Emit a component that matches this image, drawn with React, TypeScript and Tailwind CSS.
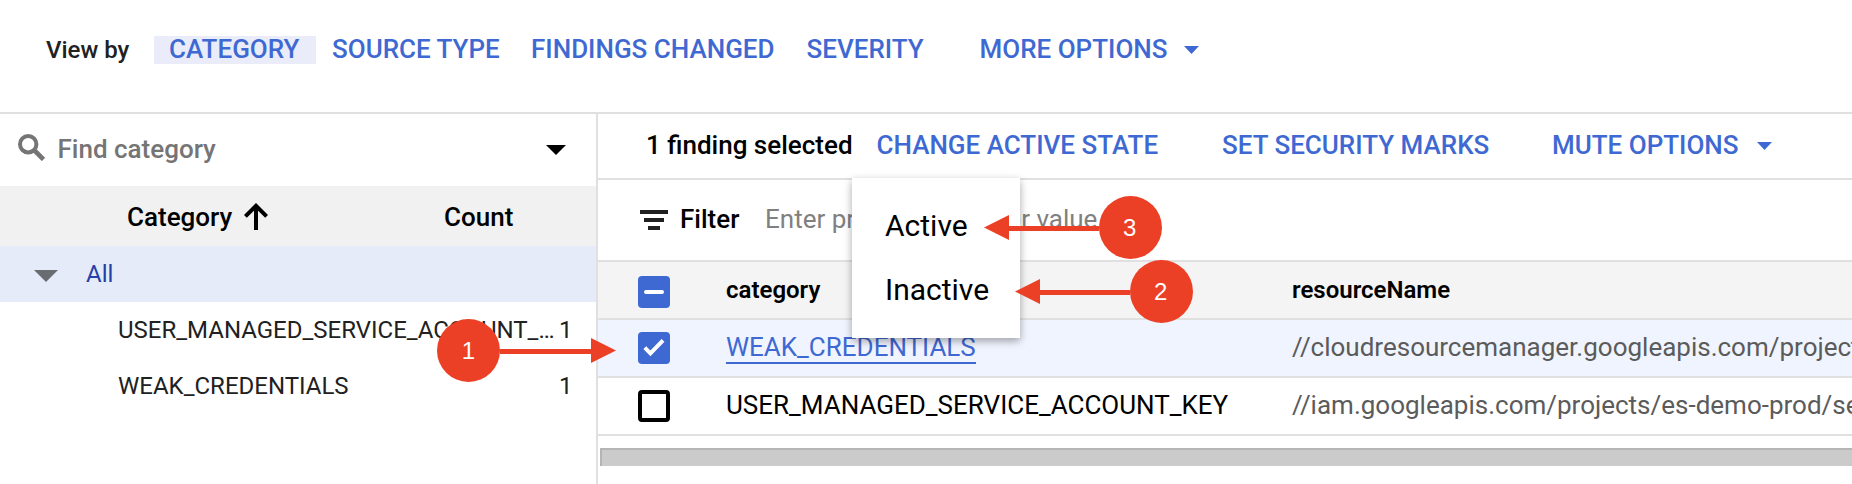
import React from "react";

function Caret({ className, w, h }: { className?: string; w: number; h: number }) {
  return (
    <svg className={`block shrink-0 ${className ?? ""}`} width={w} height={h} viewBox="0 0 20 10" preserveAspectRatio="none" fill="currentColor">
      <path d="M0 0h20L10 10z" />
    </svg>
  );
}

function Label({ className, children }: { className: string; children: React.ReactNode }) {
  return <span className={`block shrink-0 whitespace-nowrap ${className}`}>{children}</span>;
}

function Marker({ n, className, dir }: { n: number; className: string; dir: "left" | "right" }) {
  const right = dir === "right";
  return (
    <div className={`absolute flex items-center ${right ? "" : "flex-row-reverse"} ${className}`}>
      <div className="flex size-[63px] shrink-0 items-center justify-center rounded-full bg-[#eb4026] pr-[1px] font-['Liberation_Sans',sans-serif] text-2xl leading-none text-white">
        {n}
      </div>
      <div className="mt-[1px] h-[5px] flex-1 bg-[#eb4026]" />
      <svg className="block shrink-0" width="25" height="25" viewBox="0 0 25 25" fill="#eb4026">
        <path d={right ? "M0 0L25 12.5L0 25z" : "M25 0L0 12.5L25 25z"} />
      </svg>
    </div>
  );
}

function CheckBox({ state }: { state: "some" | "on" | "off" }) {
  if (state === "off") {
    return <div className="size-8 shrink-0 rounded-[4px] border-4 border-black bg-white" />;
  }
  return (
    <div className="size-8 shrink-0 rounded-[4px] bg-[#3f69d2]">
      <svg className="block" width="32" height="32" viewBox="0 0 32 32" fill="none" stroke="#fff" strokeWidth="4">
        {state === "some" ? <path d="M8 16h16" strokeLinecap="round" /> : <path d="M6.8 15.6L12.4 21.3L25 8.4" />}
      </svg>
    </div>
  );
}

export default function App() {
  return (
    <div className="relative flex h-[484px] w-[1852px] flex-col overflow-hidden bg-white font-['Roboto',sans-serif] text-black">
      <header className="h-[114px] shrink-0 border-b-2 border-[#e0e0e0]">
        <nav className="flex h-[98px] items-center text-[26px] font-medium text-[#3f69d2]">
          <Label className="ml-[46px] w-[108px] pt-[2px] text-2xl text-[#212121]">View by</Label>
          <Label className="mt-[2px] h-7 w-[162px] bg-[#eaecf9] pl-[15px] leading-[26px]">CATEGORY</Label>
          <Label className="ml-4 w-[199px]">SOURCE TYPE</Label>
          <Label className="w-[275.5px]">FINDINGS CHANGED</Label>
          <Label className="w-[173px]">SEVERITY</Label>
          <Label className="w-[204.5px]">MORE OPTIONS</Label>
          <Caret w={15} h={8} className="mt-[2px]" />
        </nav>
      </header>

      <div className="flex min-h-0 flex-1">
        <aside className="w-[598px] shrink-0 border-r-2 border-[#e0e0e0]">
          <div className="flex h-[72px] items-center">
            <svg className="ml-[18px] mt-[-5px] block shrink-0" width="28" height="27" viewBox="0 0 28 27" fill="none" stroke="#757575">
              <circle cx="10.2" cy="10.2" r="8.2" strokeWidth="4" />
              <path d="M16 16L25.5 25.5" strokeWidth="4.6" />
            </svg>
            <Label className="ml-[11.5px] mt-[-2px] w-[488.5px] text-[26px] font-medium text-[#757575]">Find category</Label>
            <Caret w={20} h={10} />
          </div>
          <div className="flex h-[60px] items-center bg-[#f1f1f1] text-[26px] font-medium">
            <Label className="ml-[127px] w-[117px] pt-[2px]">Category</Label>
            <svg className="block shrink-0" width="24" height="27" viewBox="0 0 24 27" fill="none" stroke="#000" strokeWidth="4">
              <path d="M12 27V3M1.4 13.4L12 2.8L22.6 13.4" />
            </svg>
            <Label className="ml-[176px] pt-[2px]">Count</Label>
          </div>
          <div className="flex h-14 items-center bg-[#e5ebf8] text-2xl text-[#263fa9]">
            <Caret w={24} h={12} className="ml-[34px] mt-[4px] text-[#696c70]" />
            <Label className="ml-7">All</Label>
          </div>
          <div className="flex h-14 items-center text-2xl text-[#212121]">
            <Label className="ml-[118px] w-[441px]">USER_MANAGED_SERVICE_ACCOUNT_…</Label>
            <Label className="">1</Label>
          </div>
          <div className="flex h-14 items-center text-2xl text-[#212121]">
            <Label className="ml-[118px] w-[441px]">WEAK_CREDENTIALS</Label>
            <Label className="">1</Label>
          </div>
        </aside>

        <main className="min-w-0 flex-1 text-[26px]">
          <div className="flex h-[66px] items-center border-b-2 border-[#e0e0e0] pb-[2px] font-medium text-[#3f69d2]">
            <Label className="ml-[48px] w-[230.5px] text-black">1 finding selected</Label>
            <Label className="w-[345.5px]">CHANGE ACTIVE STATE</Label>
            <Label className="w-[330px]">SET SECURITY MARKS</Label>
            <Label className="w-[205px]">MUTE OPTIONS</Label>
            <Caret w={15} h={8} className="mt-[2px]" />
          </div>
          <div className="flex h-[82px] items-center border-b-2 border-[#e0e0e0]">
            <svg className="ml-[42px] block shrink-0" width="28" height="20" viewBox="0 0 28 20" fill="#212121">
              <path d="M0 0h28v4H0zM4 8h20v4H4zM8 16h12v4H8z" />
            </svg>
            <Label className="ml-[12px] w-[85px] pb-[2px] font-medium">Filter</Label>
            <Label className="pb-[2px] text-[#808080]">Enter property name or value</Label>
          </div>
          <div className="flex h-[58px] items-center border-b-2 border-[#e0e0e0] bg-[#f4f4f4] text-2xl font-semibold">
            <div className="ml-10 mt-[4px] w-[88px] shrink-0"><CheckBox state="some" /></div>
            <Label className="w-[566px]">category</Label>
            <Label className="">resourceName</Label>
          </div>
          <div className="flex h-[58px] items-center border-b-2 border-[#e0e0e0] bg-[#f0f4fe]">
            <div className="ml-10 w-[88px] shrink-0"><CheckBox state="on" /></div>
            <div className="w-[566px] shrink-0 pb-[2px]">
              <Label className="h-[34px] w-fit border-b-2 border-[#3f69d2] leading-[34px] text-[#3f69d2]">WEAK_CREDENTIALS</Label>
            </div>
            <Label className="pb-[2px] text-[#5b5b5b]">//cloudresourcemanager.googleapis.com/projects</Label>
          </div>
          <div className="flex h-[58px] items-center border-b-2 border-[#e0e0e0]">
            <div className="ml-10 w-[88px] shrink-0"><CheckBox state="off" /></div>
            <Label className="w-[566px] pb-[2px]">USER_MANAGED_SERVICE_ACCOUNT_KEY</Label>
            <Label className="pb-[2px] text-[#5b5b5b]">//iam.googleapis.com/projects/es-demo-prod/serv</Label>
          </div>
          <div className="ml-[2px] mt-3 h-[18px] border-l-2 border-t-2 border-[#b5b5b5] bg-[#cbcbcb]" />
        </main>
      </div>

      <div className="absolute left-[852px] top-[178px] flex h-[160px] w-[168px] flex-col bg-white pl-[33px] pt-4 text-[30px] shadow-[0_3px_8px_rgba(0,0,0,0.35)]">
        <Label className="h-16 leading-[64px]">Active</Label>
        <Label className="h-16 leading-[64px]">Inactive</Label>
      </div>

      <Marker n={1} dir="right" className="left-[437.4px] top-[319.4px] w-[179px]" />
      <Marker n={2} dir="left" className="left-[1015.4px] top-[260.4px] w-[177.3px]" />
      <Marker n={3} dir="left" className="left-[984.4px] top-[196.4px] w-[177.3px]" />
    </div>
  );
}
